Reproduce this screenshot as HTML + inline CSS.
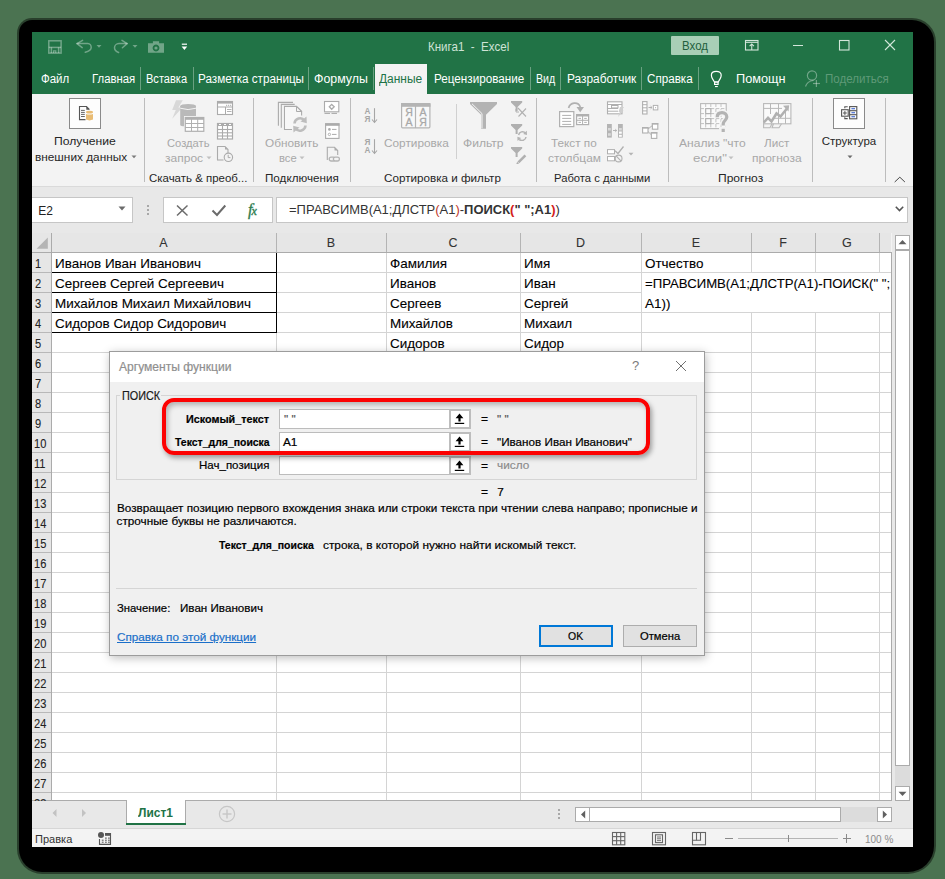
<!DOCTYPE html><html><head><meta charset="utf-8"><style>html,body{margin:0;padding:0}body{width:945px;height:879px;position:relative;overflow:hidden;background:#4b7351;font-family:"Liberation Sans",sans-serif}div{font-family:"Liberation Sans",sans-serif;}</style></head><body><div style="position:absolute;left:17px;top:18px;width:919px;height:856px;box-sizing:border-box;background:rgba(0,0,0,0.45);border-radius:15px 24px 28px 25px;"></div>
<div style="position:absolute;left:19px;top:20px;width:915px;height:852px;box-sizing:border-box;background:#000;border-radius:13px 22px 26px 23px;"></div>
<div style="position:absolute;left:32px;top:32px;width:881px;height:815px;box-sizing:border-box;background:#f3f3f3;"></div>
<div style="position:absolute;left:32px;top:32px;width:881px;height:62px;box-sizing:border-box;background:#217346;"></div>
<div style="position:absolute;left:427.50px;top:39.00px;line-height:15px;font-size:13px;color:#cfe3d6;font-weight:400;white-space:pre;transform:scaleX(0.8883);transform-origin:0 0;">Книга1  -  Excel</div>
<div style="position:absolute;left:671px;top:36px;width:48px;height:19px;box-sizing:border-box;background:#a8cfb6;border-radius:1px;"></div>
<div style="position:absolute;left:682.00px;top:39.00px;line-height:14px;font-size:12.5px;color:#235f3e;font-weight:400;white-space:pre;transform:scaleX(0.9204);transform-origin:0 0;">Вход</div>
<div style="position:absolute;left:41.40px;top:72.00px;line-height:14px;font-size:12px;color:#ffffff;font-weight:400;white-space:pre;transform:scaleX(0.9553);transform-origin:0 0;">Файл</div>
<div style="position:absolute;left:91.70px;top:72.00px;line-height:14px;font-size:12px;color:#ffffff;font-weight:400;white-space:pre;transform:scaleX(0.9461);transform-origin:0 0;">Главная</div>
<div style="position:absolute;left:146.30px;top:72.00px;line-height:14px;font-size:12px;color:#ffffff;font-weight:400;white-space:pre;transform:scaleX(0.9207);transform-origin:0 0;">Вставка</div>
<div style="position:absolute;left:198.30px;top:72.00px;line-height:14px;font-size:12px;color:#ffffff;font-weight:400;white-space:pre;transform:scaleX(0.9739);transform-origin:0 0;">Разметка страницы</div>
<div style="position:absolute;left:314.00px;top:72.00px;line-height:14px;font-size:12px;color:#ffffff;font-weight:400;white-space:pre;transform:scaleX(1.0307);transform-origin:0 0;">Формулы</div>
<div style="position:absolute;left:433.80px;top:72.00px;line-height:14px;font-size:12px;color:#ffffff;font-weight:400;white-space:pre;transform:scaleX(0.9737);transform-origin:0 0;">Рецензирование</div>
<div style="position:absolute;left:535.50px;top:72.00px;line-height:14px;font-size:12px;color:#ffffff;font-weight:400;white-space:pre;transform:scaleX(0.8794);transform-origin:0 0;">Вид</div>
<div style="position:absolute;left:566.50px;top:72.00px;line-height:14px;font-size:12px;color:#ffffff;font-weight:400;white-space:pre;transform:scaleX(0.9903);transform-origin:0 0;">Разработчик</div>
<div style="position:absolute;left:647.30px;top:72.00px;line-height:14px;font-size:12px;color:#ffffff;font-weight:400;white-space:pre;transform:scaleX(0.9703);transform-origin:0 0;">Справка</div>
<div style="position:absolute;left:736.00px;top:72.00px;line-height:14px;font-size:12px;color:#ffffff;font-weight:400;white-space:pre;transform:scaleX(1.0612);transform-origin:0 0;">Помощн</div>
<div style="position:absolute;left:140px;top:67px;width:1px;height:23px;box-sizing:border-box;background:#6aa181;"></div>
<div style="position:absolute;left:193px;top:67px;width:1px;height:23px;box-sizing:border-box;background:#6aa181;"></div>
<div style="position:absolute;left:308px;top:67px;width:1px;height:23px;box-sizing:border-box;background:#6aa181;"></div>
<div style="position:absolute;left:373px;top:67px;width:1px;height:23px;box-sizing:border-box;background:#6aa181;"></div>
<div style="position:absolute;left:530px;top:67px;width:1px;height:23px;box-sizing:border-box;background:#6aa181;"></div>
<div style="position:absolute;left:560px;top:67px;width:1px;height:23px;box-sizing:border-box;background:#6aa181;"></div>
<div style="position:absolute;left:641px;top:67px;width:1px;height:23px;box-sizing:border-box;background:#6aa181;"></div>
<div style="position:absolute;left:698px;top:67px;width:1px;height:23px;box-sizing:border-box;background:#6aa181;"></div>
<div style="position:absolute;left:375px;top:64px;width:52px;height:30px;box-sizing:border-box;background:#f3f3f3;"></div>
<div style="position:absolute;left:379.20px;top:72.00px;line-height:14px;font-size:12px;color:#217346;font-weight:400;white-space:pre;transform:scaleX(0.9959);transform-origin:0 0;">Данные</div>
<div style="position:absolute;left:824.50px;top:72.00px;line-height:14px;font-size:12px;color:#5f9a78;font-weight:400;white-space:pre;transform:scaleX(0.9617);transform-origin:0 0;">Поделиться</div>
<div style="position:absolute;left:32px;top:94px;width:881px;height:92px;box-sizing:border-box;background:#f3f3f3;"></div>
<div style="position:absolute;left:32px;top:186px;width:881px;height:1px;box-sizing:border-box;background:#dadada;"></div>
<div style="position:absolute;left:144px;top:98px;width:1px;height:84px;box-sizing:border-box;background:#bcbcbc;"></div>
<div style="position:absolute;left:253px;top:98px;width:1px;height:84px;box-sizing:border-box;background:#bcbcbc;"></div>
<div style="position:absolute;left:350px;top:98px;width:1px;height:84px;box-sizing:border-box;background:#bcbcbc;"></div>
<div style="position:absolute;left:536px;top:98px;width:1px;height:84px;box-sizing:border-box;background:#bcbcbc;"></div>
<div style="position:absolute;left:668px;top:98px;width:1px;height:84px;box-sizing:border-box;background:#bcbcbc;"></div>
<div style="position:absolute;left:812px;top:98px;width:1px;height:84px;box-sizing:border-box;background:#bcbcbc;"></div>
<div style="position:absolute;left:885px;top:98px;width:1px;height:84px;box-sizing:border-box;background:#bcbcbc;"></div>
<div style="position:absolute;left:456px;top:104px;width:1px;height:55px;box-sizing:border-box;background:#d0d0d0;"></div>
<div style="position:absolute;left:148.90px;top:171.50px;line-height:12px;font-size:11.5px;color:#262626;font-weight:400;white-space:pre;transform:scaleX(0.9961);transform-origin:0 0;">Скачать &amp; преоб...</div>
<div style="position:absolute;left:264.60px;top:171.50px;line-height:12px;font-size:11.5px;color:#262626;font-weight:400;white-space:pre;transform:scaleX(1.0132);transform-origin:0 0;">Подключения</div>
<div style="position:absolute;left:384.40px;top:171.50px;line-height:12px;font-size:11.5px;color:#262626;font-weight:400;white-space:pre;transform:scaleX(1.0140);transform-origin:0 0;">Сортировка и фильтр</div>
<div style="position:absolute;left:554.30px;top:171.50px;line-height:12px;font-size:11.5px;color:#262626;font-weight:400;white-space:pre;transform:scaleX(0.9777);transform-origin:0 0;">Работа с данными</div>
<div style="position:absolute;left:717.60px;top:171.50px;line-height:12px;font-size:11.5px;color:#262626;font-weight:400;white-space:pre;transform:scaleX(1.0481);transform-origin:0 0;">Прогноз</div>
<div style="position:absolute;left:54.00px;top:134.70px;line-height:12px;font-size:11.5px;color:#262626;font-weight:400;white-space:pre;transform:scaleX(1.0579);transform-origin:0 0;">Получение</div>
<div style="position:absolute;left:34.50px;top:151.20px;line-height:12px;font-size:11.5px;color:#262626;font-weight:400;white-space:pre;transform:scaleX(1.0274);transform-origin:0 0;">внешних данных</div>
<div style="position:absolute;left:167.30px;top:136.60px;line-height:12px;font-size:11.5px;color:#a8a8a8;font-weight:400;white-space:pre;transform:scaleX(0.9725);transform-origin:0 0;">Создать</div>
<div style="position:absolute;left:164.80px;top:151.80px;line-height:12px;font-size:11.5px;color:#a8a8a8;font-weight:400;white-space:pre;transform:scaleX(1.0451);transform-origin:0 0;">запрос</div>
<div style="position:absolute;left:264.60px;top:136.60px;line-height:12px;font-size:11.5px;color:#a8a8a8;font-weight:400;white-space:pre;transform:scaleX(1.0251);transform-origin:0 0;">Обновить</div>
<div style="position:absolute;left:278.60px;top:151.80px;line-height:12px;font-size:11.5px;color:#a8a8a8;font-weight:400;white-space:pre;transform:scaleX(0.9772);transform-origin:0 0;">все</div>
<div style="position:absolute;left:383.70px;top:136.60px;line-height:12px;font-size:11.5px;color:#a8a8a8;font-weight:400;white-space:pre;transform:scaleX(1.0264);transform-origin:0 0;">Сортировка</div>
<div style="position:absolute;left:463.30px;top:136.60px;line-height:12px;font-size:11.5px;color:#a8a8a8;font-weight:400;white-space:pre;transform:scaleX(1.0507);transform-origin:0 0;">Фильтр</div>
<div style="position:absolute;left:551.30px;top:137.00px;line-height:12px;font-size:11.5px;color:#a8a8a8;font-weight:400;white-space:pre;transform:scaleX(1.0203);transform-origin:0 0;">Текст по</div>
<div style="position:absolute;left:547.60px;top:152.40px;line-height:12px;font-size:11.5px;color:#a8a8a8;font-weight:400;white-space:pre;transform:scaleX(1.0345);transform-origin:0 0;">столбцам</div>
<div style="position:absolute;left:679.00px;top:136.80px;line-height:12px;font-size:11.5px;color:#a8a8a8;font-weight:400;white-space:pre;transform:scaleX(1.0479);transform-origin:0 0;">Анализ "что</div>
<div style="position:absolute;left:693.00px;top:152.40px;line-height:12px;font-size:11.5px;color:#a8a8a8;font-weight:400;white-space:pre;transform:scaleX(1.1572);transform-origin:0 0;">если"</div>
<div style="position:absolute;left:764.00px;top:136.80px;line-height:12px;font-size:11.5px;color:#a8a8a8;font-weight:400;white-space:pre;transform:scaleX(1.0155);transform-origin:0 0;">Лист</div>
<div style="position:absolute;left:751.70px;top:152.40px;line-height:12px;font-size:11.5px;color:#a8a8a8;font-weight:400;white-space:pre;transform:scaleX(1.0431);transform-origin:0 0;">прогноза</div>
<div style="position:absolute;left:821.70px;top:134.70px;line-height:12px;font-size:11.5px;color:#262626;font-weight:400;white-space:pre;">Структура</div>
<div style="position:absolute;left:69px;top:98px;width:32px;height:31px;box-sizing:border-box;background:#fdfdfd;border:1px solid #8a8a8a;"></div>
<div style="position:absolute;left:833px;top:98px;width:32px;height:31px;box-sizing:border-box;background:#fdfdfd;border:1px solid #8a8a8a;"></div>
<div style="position:absolute;left:32px;top:187px;width:881px;height:46px;box-sizing:border-box;background:#e8e8e8;"></div>
<div style="position:absolute;left:32px;top:197px;width:101px;height:26px;box-sizing:border-box;background:#fff;border:1px solid #c6c6c6;border-left:none;"></div>
<div style="position:absolute;left:38.30px;top:203.50px;line-height:14px;font-size:12px;color:#222;font-weight:400;white-space:pre;">E2</div>
<div style="position:absolute;left:163px;top:197px;width:110px;height:26px;box-sizing:border-box;background:#fff;border:1px solid #c6c6c6;"></div>
<div style="position:absolute;left:276px;top:197px;width:632px;height:26px;box-sizing:border-box;background:#fff;border:1px solid #c6c6c6;"></div>
<div style="position:absolute;left:288.60px;top:202.60px;line-height:14px;font-size:12.5px;color:#333;font-weight:400;white-space:pre;transform:scaleX(1.0370);transform-origin:0 0;">=ПРАВСИМВ(A1;ДЛСТР<span style="color:#c0392b">(</span>A1<span style="color:#c0392b">)</span>-<b>ПОИСК<span style="color:#d42020">(</span>" ";A1<span style="color:#d42020">)</span></b>)</div>
<div style="position:absolute;left:32px;top:233px;width:859px;height:19px;box-sizing:border-box;background:#e6e6e6;"></div>
<div style="position:absolute;left:32px;top:252px;width:859px;height:1px;box-sizing:border-box;background:#ababab;"></div>
<div style="position:absolute;left:51px;top:233px;width:1px;height:567px;box-sizing:border-box;background:#ababab;"></div>
<div style="position:absolute;left:159.31px;top:235.70px;line-height:14px;font-size:12.5px;color:#333;font-weight:400;white-space:pre;-webkit-text-stroke:0.1px currentColor;">A</div>
<div style="position:absolute;left:276px;top:233px;width:1px;height:19px;box-sizing:border-box;background:#b4b4b4;"></div>
<div style="position:absolute;left:326.84px;top:235.70px;line-height:14px;font-size:12.5px;color:#333;font-weight:400;white-space:pre;-webkit-text-stroke:0.1px currentColor;">B</div>
<div style="position:absolute;left:386px;top:233px;width:1px;height:19px;box-sizing:border-box;background:#b4b4b4;"></div>
<div style="position:absolute;left:448.50px;top:235.70px;line-height:14px;font-size:12.5px;color:#333;font-weight:400;white-space:pre;-webkit-text-stroke:0.1px currentColor;">C</div>
<div style="position:absolute;left:520px;top:233px;width:1px;height:19px;box-sizing:border-box;background:#b4b4b4;"></div>
<div style="position:absolute;left:576.00px;top:235.70px;line-height:14px;font-size:12.5px;color:#333;font-weight:400;white-space:pre;-webkit-text-stroke:0.1px currentColor;">D</div>
<div style="position:absolute;left:641px;top:233px;width:1px;height:19px;box-sizing:border-box;background:#b4b4b4;"></div>
<div style="position:absolute;left:691.84px;top:235.70px;line-height:14px;font-size:12.5px;color:#333;font-weight:400;white-space:pre;-webkit-text-stroke:0.1px currentColor;">E</div>
<div style="position:absolute;left:751px;top:233px;width:1px;height:19px;box-sizing:border-box;background:#b4b4b4;"></div>
<div style="position:absolute;left:779.19px;top:235.70px;line-height:14px;font-size:12.5px;color:#333;font-weight:400;white-space:pre;-webkit-text-stroke:0.1px currentColor;">F</div>
<div style="position:absolute;left:815px;top:233px;width:1px;height:19px;box-sizing:border-box;background:#b4b4b4;"></div>
<div style="position:absolute;left:842.12px;top:235.70px;line-height:14px;font-size:12.5px;color:#333;font-weight:400;white-space:pre;-webkit-text-stroke:0.1px currentColor;">G</div>
<div style="position:absolute;left:879px;top:233px;width:1px;height:19px;box-sizing:border-box;background:#b4b4b4;"></div>
<div style="position:absolute;left:52px;top:253px;width:839px;height:547px;box-sizing:border-box;background:#fff;"></div>
<div style="position:absolute;left:32px;top:253px;width:19px;height:547px;box-sizing:border-box;background:#e6e6e6;"></div>
<div style="position:absolute;left:52px;top:272px;width:839px;height:1px;box-sizing:border-box;background:#d4d4d4;"></div>
<div style="position:absolute;left:32px;top:272px;width:19px;height:1px;box-sizing:border-box;background:#b8b8b8;"></div>
<div style="position:absolute;left:52px;top:292px;width:839px;height:1px;box-sizing:border-box;background:#d4d4d4;"></div>
<div style="position:absolute;left:32px;top:292px;width:19px;height:1px;box-sizing:border-box;background:#b8b8b8;"></div>
<div style="position:absolute;left:52px;top:312px;width:839px;height:1px;box-sizing:border-box;background:#d4d4d4;"></div>
<div style="position:absolute;left:32px;top:312px;width:19px;height:1px;box-sizing:border-box;background:#b8b8b8;"></div>
<div style="position:absolute;left:52px;top:332px;width:839px;height:1px;box-sizing:border-box;background:#d4d4d4;"></div>
<div style="position:absolute;left:32px;top:332px;width:19px;height:1px;box-sizing:border-box;background:#b8b8b8;"></div>
<div style="position:absolute;left:52px;top:352px;width:839px;height:1px;box-sizing:border-box;background:#d4d4d4;"></div>
<div style="position:absolute;left:32px;top:352px;width:19px;height:1px;box-sizing:border-box;background:#b8b8b8;"></div>
<div style="position:absolute;left:52px;top:372px;width:839px;height:1px;box-sizing:border-box;background:#d4d4d4;"></div>
<div style="position:absolute;left:32px;top:372px;width:19px;height:1px;box-sizing:border-box;background:#b8b8b8;"></div>
<div style="position:absolute;left:52px;top:392px;width:839px;height:1px;box-sizing:border-box;background:#d4d4d4;"></div>
<div style="position:absolute;left:32px;top:392px;width:19px;height:1px;box-sizing:border-box;background:#b8b8b8;"></div>
<div style="position:absolute;left:52px;top:412px;width:839px;height:1px;box-sizing:border-box;background:#d4d4d4;"></div>
<div style="position:absolute;left:32px;top:412px;width:19px;height:1px;box-sizing:border-box;background:#b8b8b8;"></div>
<div style="position:absolute;left:52px;top:432px;width:839px;height:1px;box-sizing:border-box;background:#d4d4d4;"></div>
<div style="position:absolute;left:32px;top:432px;width:19px;height:1px;box-sizing:border-box;background:#b8b8b8;"></div>
<div style="position:absolute;left:52px;top:452px;width:839px;height:1px;box-sizing:border-box;background:#d4d4d4;"></div>
<div style="position:absolute;left:32px;top:452px;width:19px;height:1px;box-sizing:border-box;background:#b8b8b8;"></div>
<div style="position:absolute;left:52px;top:472px;width:839px;height:1px;box-sizing:border-box;background:#d4d4d4;"></div>
<div style="position:absolute;left:32px;top:472px;width:19px;height:1px;box-sizing:border-box;background:#b8b8b8;"></div>
<div style="position:absolute;left:52px;top:492px;width:839px;height:1px;box-sizing:border-box;background:#d4d4d4;"></div>
<div style="position:absolute;left:32px;top:492px;width:19px;height:1px;box-sizing:border-box;background:#b8b8b8;"></div>
<div style="position:absolute;left:52px;top:512px;width:839px;height:1px;box-sizing:border-box;background:#d4d4d4;"></div>
<div style="position:absolute;left:32px;top:512px;width:19px;height:1px;box-sizing:border-box;background:#b8b8b8;"></div>
<div style="position:absolute;left:52px;top:532px;width:839px;height:1px;box-sizing:border-box;background:#d4d4d4;"></div>
<div style="position:absolute;left:32px;top:532px;width:19px;height:1px;box-sizing:border-box;background:#b8b8b8;"></div>
<div style="position:absolute;left:52px;top:552px;width:839px;height:1px;box-sizing:border-box;background:#d4d4d4;"></div>
<div style="position:absolute;left:32px;top:552px;width:19px;height:1px;box-sizing:border-box;background:#b8b8b8;"></div>
<div style="position:absolute;left:52px;top:572px;width:839px;height:1px;box-sizing:border-box;background:#d4d4d4;"></div>
<div style="position:absolute;left:32px;top:572px;width:19px;height:1px;box-sizing:border-box;background:#b8b8b8;"></div>
<div style="position:absolute;left:52px;top:592px;width:839px;height:1px;box-sizing:border-box;background:#d4d4d4;"></div>
<div style="position:absolute;left:32px;top:592px;width:19px;height:1px;box-sizing:border-box;background:#b8b8b8;"></div>
<div style="position:absolute;left:52px;top:612px;width:839px;height:1px;box-sizing:border-box;background:#d4d4d4;"></div>
<div style="position:absolute;left:32px;top:612px;width:19px;height:1px;box-sizing:border-box;background:#b8b8b8;"></div>
<div style="position:absolute;left:52px;top:632px;width:839px;height:1px;box-sizing:border-box;background:#d4d4d4;"></div>
<div style="position:absolute;left:32px;top:632px;width:19px;height:1px;box-sizing:border-box;background:#b8b8b8;"></div>
<div style="position:absolute;left:52px;top:652px;width:839px;height:1px;box-sizing:border-box;background:#d4d4d4;"></div>
<div style="position:absolute;left:32px;top:652px;width:19px;height:1px;box-sizing:border-box;background:#b8b8b8;"></div>
<div style="position:absolute;left:52px;top:672px;width:839px;height:1px;box-sizing:border-box;background:#d4d4d4;"></div>
<div style="position:absolute;left:32px;top:672px;width:19px;height:1px;box-sizing:border-box;background:#b8b8b8;"></div>
<div style="position:absolute;left:52px;top:692px;width:839px;height:1px;box-sizing:border-box;background:#d4d4d4;"></div>
<div style="position:absolute;left:32px;top:692px;width:19px;height:1px;box-sizing:border-box;background:#b8b8b8;"></div>
<div style="position:absolute;left:52px;top:712px;width:839px;height:1px;box-sizing:border-box;background:#d4d4d4;"></div>
<div style="position:absolute;left:32px;top:712px;width:19px;height:1px;box-sizing:border-box;background:#b8b8b8;"></div>
<div style="position:absolute;left:52px;top:732px;width:839px;height:1px;box-sizing:border-box;background:#d4d4d4;"></div>
<div style="position:absolute;left:32px;top:732px;width:19px;height:1px;box-sizing:border-box;background:#b8b8b8;"></div>
<div style="position:absolute;left:52px;top:752px;width:839px;height:1px;box-sizing:border-box;background:#d4d4d4;"></div>
<div style="position:absolute;left:32px;top:752px;width:19px;height:1px;box-sizing:border-box;background:#b8b8b8;"></div>
<div style="position:absolute;left:52px;top:772px;width:839px;height:1px;box-sizing:border-box;background:#d4d4d4;"></div>
<div style="position:absolute;left:32px;top:772px;width:19px;height:1px;box-sizing:border-box;background:#b8b8b8;"></div>
<div style="position:absolute;left:52px;top:792px;width:839px;height:1px;box-sizing:border-box;background:#d4d4d4;"></div>
<div style="position:absolute;left:32px;top:792px;width:19px;height:1px;box-sizing:border-box;background:#b8b8b8;"></div>
<div style="position:absolute;left:276px;top:253px;width:1px;height:547px;box-sizing:border-box;background:#d4d4d4;"></div>
<div style="position:absolute;left:386px;top:253px;width:1px;height:547px;box-sizing:border-box;background:#d4d4d4;"></div>
<div style="position:absolute;left:520px;top:253px;width:1px;height:547px;box-sizing:border-box;background:#d4d4d4;"></div>
<div style="position:absolute;left:641px;top:253px;width:1px;height:547px;box-sizing:border-box;background:#d4d4d4;"></div>
<div style="position:absolute;left:751px;top:253px;width:1px;height:547px;box-sizing:border-box;background:#d4d4d4;"></div>
<div style="position:absolute;left:815px;top:253px;width:1px;height:547px;box-sizing:border-box;background:#d4d4d4;"></div>
<div style="position:absolute;left:879px;top:253px;width:1px;height:547px;box-sizing:border-box;background:#d4d4d4;"></div>
<div style="position:absolute;left:891px;top:252px;width:1px;height:549px;box-sizing:border-box;background:#ababab;"></div>
<div style="position:absolute;left:32px;top:800px;width:860px;height:1px;box-sizing:border-box;background:#ababab;"></div>
<div style="position:absolute;left:35.33px;top:257.00px;line-height:14px;font-size:12.3px;color:#222;font-weight:400;white-space:pre;transform:scaleX(0.9000);transform-origin:0 0;-webkit-text-stroke:0.1px currentColor;">1</div>
<div style="position:absolute;left:35.33px;top:277.00px;line-height:14px;font-size:12.3px;color:#222;font-weight:400;white-space:pre;transform:scaleX(0.9000);transform-origin:0 0;-webkit-text-stroke:0.1px currentColor;">2</div>
<div style="position:absolute;left:35.33px;top:297.00px;line-height:14px;font-size:12.3px;color:#222;font-weight:400;white-space:pre;transform:scaleX(0.9000);transform-origin:0 0;-webkit-text-stroke:0.1px currentColor;">3</div>
<div style="position:absolute;left:35.33px;top:317.00px;line-height:14px;font-size:12.3px;color:#222;font-weight:400;white-space:pre;transform:scaleX(0.9000);transform-origin:0 0;-webkit-text-stroke:0.1px currentColor;">4</div>
<div style="position:absolute;left:35.33px;top:337.00px;line-height:14px;font-size:12.3px;color:#222;font-weight:400;white-space:pre;transform:scaleX(0.9000);transform-origin:0 0;-webkit-text-stroke:0.1px currentColor;">5</div>
<div style="position:absolute;left:35.33px;top:357.00px;line-height:14px;font-size:12.3px;color:#222;font-weight:400;white-space:pre;transform:scaleX(0.9000);transform-origin:0 0;-webkit-text-stroke:0.1px currentColor;">6</div>
<div style="position:absolute;left:35.33px;top:377.00px;line-height:14px;font-size:12.3px;color:#222;font-weight:400;white-space:pre;transform:scaleX(0.9000);transform-origin:0 0;-webkit-text-stroke:0.1px currentColor;">7</div>
<div style="position:absolute;left:35.33px;top:397.00px;line-height:14px;font-size:12.3px;color:#222;font-weight:400;white-space:pre;transform:scaleX(0.9000);transform-origin:0 0;-webkit-text-stroke:0.1px currentColor;">8</div>
<div style="position:absolute;left:35.33px;top:417.00px;line-height:14px;font-size:12.3px;color:#222;font-weight:400;white-space:pre;transform:scaleX(0.9000);transform-origin:0 0;-webkit-text-stroke:0.1px currentColor;">9</div>
<div style="position:absolute;left:33.56px;top:437.00px;line-height:14px;font-size:12.3px;color:#222;font-weight:400;white-space:pre;transform:scaleX(0.9000);transform-origin:0 0;-webkit-text-stroke:0.1px currentColor;">10</div>
<div style="position:absolute;left:33.94px;top:457.00px;line-height:14px;font-size:12.3px;color:#222;font-weight:400;white-space:pre;transform:scaleX(0.9000);transform-origin:0 0;-webkit-text-stroke:0.1px currentColor;">11</div>
<div style="position:absolute;left:33.56px;top:477.00px;line-height:14px;font-size:12.3px;color:#222;font-weight:400;white-space:pre;transform:scaleX(0.9000);transform-origin:0 0;-webkit-text-stroke:0.1px currentColor;">12</div>
<div style="position:absolute;left:33.56px;top:497.00px;line-height:14px;font-size:12.3px;color:#222;font-weight:400;white-space:pre;transform:scaleX(0.9000);transform-origin:0 0;-webkit-text-stroke:0.1px currentColor;">13</div>
<div style="position:absolute;left:33.56px;top:517.00px;line-height:14px;font-size:12.3px;color:#222;font-weight:400;white-space:pre;transform:scaleX(0.9000);transform-origin:0 0;-webkit-text-stroke:0.1px currentColor;">14</div>
<div style="position:absolute;left:33.56px;top:537.00px;line-height:14px;font-size:12.3px;color:#222;font-weight:400;white-space:pre;transform:scaleX(0.9000);transform-origin:0 0;-webkit-text-stroke:0.1px currentColor;">15</div>
<div style="position:absolute;left:33.56px;top:557.00px;line-height:14px;font-size:12.3px;color:#222;font-weight:400;white-space:pre;transform:scaleX(0.9000);transform-origin:0 0;-webkit-text-stroke:0.1px currentColor;">16</div>
<div style="position:absolute;left:33.56px;top:577.00px;line-height:14px;font-size:12.3px;color:#222;font-weight:400;white-space:pre;transform:scaleX(0.9000);transform-origin:0 0;-webkit-text-stroke:0.1px currentColor;">17</div>
<div style="position:absolute;left:33.56px;top:597.00px;line-height:14px;font-size:12.3px;color:#222;font-weight:400;white-space:pre;transform:scaleX(0.9000);transform-origin:0 0;-webkit-text-stroke:0.1px currentColor;">18</div>
<div style="position:absolute;left:33.56px;top:617.00px;line-height:14px;font-size:12.3px;color:#222;font-weight:400;white-space:pre;transform:scaleX(0.9000);transform-origin:0 0;-webkit-text-stroke:0.1px currentColor;">19</div>
<div style="position:absolute;left:33.56px;top:637.00px;line-height:14px;font-size:12.3px;color:#222;font-weight:400;white-space:pre;transform:scaleX(0.9000);transform-origin:0 0;-webkit-text-stroke:0.1px currentColor;">20</div>
<div style="position:absolute;left:33.56px;top:657.00px;line-height:14px;font-size:12.3px;color:#222;font-weight:400;white-space:pre;transform:scaleX(0.9000);transform-origin:0 0;-webkit-text-stroke:0.1px currentColor;">21</div>
<div style="position:absolute;left:33.56px;top:677.00px;line-height:14px;font-size:12.3px;color:#222;font-weight:400;white-space:pre;transform:scaleX(0.9000);transform-origin:0 0;-webkit-text-stroke:0.1px currentColor;">22</div>
<div style="position:absolute;left:33.56px;top:697.00px;line-height:14px;font-size:12.3px;color:#222;font-weight:400;white-space:pre;transform:scaleX(0.9000);transform-origin:0 0;-webkit-text-stroke:0.1px currentColor;">23</div>
<div style="position:absolute;left:33.56px;top:717.00px;line-height:14px;font-size:12.3px;color:#222;font-weight:400;white-space:pre;transform:scaleX(0.9000);transform-origin:0 0;-webkit-text-stroke:0.1px currentColor;">24</div>
<div style="position:absolute;left:33.56px;top:737.00px;line-height:14px;font-size:12.3px;color:#222;font-weight:400;white-space:pre;transform:scaleX(0.9000);transform-origin:0 0;-webkit-text-stroke:0.1px currentColor;">25</div>
<div style="position:absolute;left:33.56px;top:757.00px;line-height:14px;font-size:12.3px;color:#222;font-weight:400;white-space:pre;transform:scaleX(0.9000);transform-origin:0 0;-webkit-text-stroke:0.1px currentColor;">26</div>
<div style="position:absolute;left:33.56px;top:777.00px;line-height:14px;font-size:12.3px;color:#222;font-weight:400;white-space:pre;transform:scaleX(0.9000);transform-origin:0 0;-webkit-text-stroke:0.1px currentColor;">27</div>
<div style="position:absolute;left:33.56px;top:797.00px;line-height:14px;font-size:12.3px;color:#222;font-weight:400;white-space:pre;transform:scaleX(0.9000);transform-origin:0 0;-webkit-text-stroke:0.1px currentColor;">28</div>
<div style="position:absolute;left:54.80px;top:256.00px;line-height:15px;font-size:13.1px;color:#000;font-weight:400;white-space:pre;transform:scaleX(1.0270);transform-origin:0 0;-webkit-text-stroke:0.1px currentColor;">Иванов Иван Иванович</div>
<div style="position:absolute;left:54.80px;top:276.00px;line-height:15px;font-size:13.1px;color:#000;font-weight:400;white-space:pre;transform:scaleX(1.0270);transform-origin:0 0;-webkit-text-stroke:0.1px currentColor;">Сергеев Сергей Сергеевич</div>
<div style="position:absolute;left:54.80px;top:296.00px;line-height:15px;font-size:13.1px;color:#000;font-weight:400;white-space:pre;transform:scaleX(1.0270);transform-origin:0 0;-webkit-text-stroke:0.1px currentColor;">Михайлов Михаил Михайлович</div>
<div style="position:absolute;left:54.80px;top:316.00px;line-height:15px;font-size:13.1px;color:#000;font-weight:400;white-space:pre;transform:scaleX(1.0270);transform-origin:0 0;-webkit-text-stroke:0.1px currentColor;">Сидоров Сидор Сидорович</div>
<div style="position:absolute;left:389.80px;top:256.00px;line-height:15px;font-size:13.1px;color:#000;font-weight:400;white-space:pre;transform:scaleX(1.0270);transform-origin:0 0;-webkit-text-stroke:0.1px currentColor;">Фамилия</div>
<div style="position:absolute;left:389.80px;top:276.00px;line-height:15px;font-size:13.1px;color:#000;font-weight:400;white-space:pre;transform:scaleX(1.0270);transform-origin:0 0;-webkit-text-stroke:0.1px currentColor;">Иванов</div>
<div style="position:absolute;left:389.80px;top:296.00px;line-height:15px;font-size:13.1px;color:#000;font-weight:400;white-space:pre;transform:scaleX(1.0270);transform-origin:0 0;-webkit-text-stroke:0.1px currentColor;">Сергеев</div>
<div style="position:absolute;left:389.80px;top:316.00px;line-height:15px;font-size:13.1px;color:#000;font-weight:400;white-space:pre;transform:scaleX(1.0270);transform-origin:0 0;-webkit-text-stroke:0.1px currentColor;">Михайлов</div>
<div style="position:absolute;left:389.80px;top:336.00px;line-height:15px;font-size:13.1px;color:#000;font-weight:400;white-space:pre;transform:scaleX(1.0270);transform-origin:0 0;-webkit-text-stroke:0.1px currentColor;">Сидоров</div>
<div style="position:absolute;left:523.80px;top:256.00px;line-height:15px;font-size:13.1px;color:#000;font-weight:400;white-space:pre;transform:scaleX(1.0270);transform-origin:0 0;-webkit-text-stroke:0.1px currentColor;">Имя</div>
<div style="position:absolute;left:523.80px;top:276.00px;line-height:15px;font-size:13.1px;color:#000;font-weight:400;white-space:pre;transform:scaleX(1.0270);transform-origin:0 0;-webkit-text-stroke:0.1px currentColor;">Иван</div>
<div style="position:absolute;left:523.80px;top:296.00px;line-height:15px;font-size:13.1px;color:#000;font-weight:400;white-space:pre;transform:scaleX(1.0270);transform-origin:0 0;-webkit-text-stroke:0.1px currentColor;">Сергей</div>
<div style="position:absolute;left:523.80px;top:316.00px;line-height:15px;font-size:13.1px;color:#000;font-weight:400;white-space:pre;transform:scaleX(1.0270);transform-origin:0 0;-webkit-text-stroke:0.1px currentColor;">Михаил</div>
<div style="position:absolute;left:523.80px;top:336.00px;line-height:15px;font-size:13.1px;color:#000;font-weight:400;white-space:pre;transform:scaleX(1.0270);transform-origin:0 0;-webkit-text-stroke:0.1px currentColor;">Сидор</div>
<div style="position:absolute;left:644.80px;top:256.00px;line-height:15px;font-size:13.1px;color:#000;font-weight:400;white-space:pre;transform:scaleX(1.0270);transform-origin:0 0;-webkit-text-stroke:0.1px currentColor;">Отчество</div>
<div style="position:absolute;left:642px;top:273px;width:249px;height:39px;box-sizing:border-box;background:#fff;"></div>
<div style="position:absolute;left:644.80px;top:276.00px;line-height:15px;font-size:13.1px;color:#000;font-weight:400;white-space:pre;transform:scaleX(1.0052);transform-origin:0 0;-webkit-text-stroke:0.1px currentColor;">=ПРАВСИМВ(A1;ДЛСТР(A1)-ПОИСК(" ";</div>
<div style="position:absolute;left:644.80px;top:296.00px;line-height:15px;font-size:13.1px;color:#000;font-weight:400;white-space:pre;transform:scaleX(1.0270);transform-origin:0 0;-webkit-text-stroke:0.1px currentColor;">A1))</div>
<div style="position:absolute;left:52px;top:253px;width:225px;height:80px;box-sizing:border-box;border:1px solid #000;border-top:none;border-left:none;"></div>
<div style="position:absolute;left:52px;top:272px;width:225px;height:1px;box-sizing:border-box;background:#000;"></div>
<div style="position:absolute;left:52px;top:292px;width:225px;height:1px;box-sizing:border-box;background:#000;"></div>
<div style="position:absolute;left:52px;top:312px;width:225px;height:1px;box-sizing:border-box;background:#000;"></div>
<div style="position:absolute;left:892px;top:233px;width:21px;height:595px;box-sizing:border-box;background:#e8e8e8;"></div>
<div style="position:absolute;left:895px;top:235px;width:15px;height:15px;box-sizing:border-box;background:#fff;border:1px solid #ababab;"></div>
<div style="position:absolute;left:895px;top:250px;width:15px;height:537px;box-sizing:border-box;background:#dcdcdc;"></div>
<div style="position:absolute;left:895px;top:250px;width:15px;height:516px;box-sizing:border-box;background:#fff;border:1px solid #ababab;"></div>
<div style="position:absolute;left:895px;top:786px;width:15px;height:15px;box-sizing:border-box;background:#fff;border:1px solid #ababab;"></div>
<div style="position:absolute;left:32px;top:801px;width:860px;height:27px;box-sizing:border-box;background:#e8e8e8;"></div>
<div style="position:absolute;left:126px;top:800px;width:60px;height:25px;box-sizing:border-box;background:#fff;border-right:1px solid #ababab;border-left:1px solid #ababab;"></div>
<div style="position:absolute;left:126px;top:823px;width:60px;height:2px;box-sizing:border-box;background:#217346;"></div>
<div style="position:absolute;left:138.00px;top:806.00px;line-height:14px;font-size:12.5px;color:#217346;font-weight:700;white-space:pre;transform:scaleX(0.9562);transform-origin:0 0;">Лист1</div>
<div style="position:absolute;left:575px;top:807px;width:15px;height:15px;box-sizing:border-box;background:#fff;border:1px solid #ababab;"></div>
<div style="position:absolute;left:589px;top:807px;width:288px;height:15px;box-sizing:border-box;background:#dcdcdc;"></div>
<div style="position:absolute;left:589px;top:807px;width:252px;height:15px;box-sizing:border-box;background:#fff;border:1px solid #ababab;"></div>
<div style="position:absolute;left:877px;top:807px;width:15px;height:15px;box-sizing:border-box;background:#fff;border:1px solid #ababab;"></div>
<div style="position:absolute;left:32px;top:828px;width:881px;height:19px;box-sizing:border-box;background:#f3f3f3;"></div>
<div style="position:absolute;left:32px;top:828px;width:881px;height:1px;box-sizing:border-box;background:#d6d6d6;"></div>
<div style="position:absolute;left:34.90px;top:832.90px;line-height:12px;font-size:11px;color:#333;font-weight:400;white-space:pre;transform:scaleX(1.0032);transform-origin:0 0;">Правка</div>
<div style="position:absolute;left:865.00px;top:832.90px;line-height:12px;font-size:11px;color:#8a8a8a;font-weight:400;white-space:pre;transform:scaleX(0.9075);transform-origin:0 0;">100 %</div>
<div style="position:absolute;left:109px;top:351px;width:596px;height:305px;box-sizing:border-box;background:#f0f0f0;border:1px solid #9c9c9c;box-shadow:1px 2px 9px rgba(0,0,0,0.26);"></div>
<div style="position:absolute;left:110px;top:352px;width:594px;height:30px;box-sizing:border-box;background:#fff;"></div>
<div style="position:absolute;left:118.60px;top:360.30px;line-height:14px;font-size:12.2px;color:#8f8f8f;font-weight:400;white-space:pre;transform:scaleX(0.9903);transform-origin:0 0;-webkit-text-stroke:0.2px currentColor;">Аргументы функции</div>
<div style="position:absolute;left:116px;top:395px;width:581px;height:85px;box-sizing:border-box;border:1px solid #d5d5d5;"></div>
<div style="position:absolute;left:120px;top:390px;width:41px;height:10px;box-sizing:border-box;background:#f0f0f0;"></div>
<div style="position:absolute;left:122.20px;top:388.70px;line-height:14px;font-size:12px;color:#1a1a1a;font-weight:400;white-space:pre;transform:scaleX(0.9020);transform-origin:0 0;-webkit-text-stroke:0.2px currentColor;">ПОИСК</div>
<div style="position:absolute;left:186.40px;top:412.00px;line-height:14px;font-size:11.8px;color:#000;font-weight:700;white-space:pre;transform:scaleX(0.9129);transform-origin:0 0;-webkit-text-stroke:0.2px currentColor;">Искомый_текст</div>
<div style="position:absolute;left:174.60px;top:434.80px;line-height:14px;font-size:11.8px;color:#000;font-weight:700;white-space:pre;transform:scaleX(0.8858);transform-origin:0 0;-webkit-text-stroke:0.2px currentColor;">Текст_для_поиска</div>
<div style="position:absolute;left:199.00px;top:457.60px;line-height:14px;font-size:11.8px;color:#000;font-weight:400;white-space:pre;transform:scaleX(0.9764);transform-origin:0 0;-webkit-text-stroke:0.2px currentColor;">Нач_позиция</div>
<div style="position:absolute;left:279px;top:409px;width:171px;height:20px;box-sizing:border-box;background:#fff;border:1px solid #bcbcbc;"></div>
<div style="position:absolute;left:449px;top:409px;width:22px;height:20px;box-sizing:border-box;background:#fff;border:2px solid #bdbdbd;"></div>
<div style="position:absolute;left:481.00px;top:412.00px;line-height:14px;font-size:12px;color:#000;font-weight:400;white-space:pre;-webkit-text-stroke:0.2px currentColor;">=</div>
<div style="position:absolute;left:279px;top:432px;width:171px;height:20px;box-sizing:border-box;background:#fff;border:1px solid #bcbcbc;"></div>
<div style="position:absolute;left:449px;top:432px;width:22px;height:20px;box-sizing:border-box;background:#fff;border:2px solid #bdbdbd;"></div>
<div style="position:absolute;left:481.00px;top:435.00px;line-height:14px;font-size:12px;color:#000;font-weight:400;white-space:pre;-webkit-text-stroke:0.2px currentColor;">=</div>
<div style="position:absolute;left:279px;top:456px;width:171px;height:19px;box-sizing:border-box;background:#fff;border:1px solid #bcbcbc;"></div>
<div style="position:absolute;left:449px;top:456px;width:22px;height:19px;box-sizing:border-box;background:#fff;border:2px solid #bdbdbd;"></div>
<div style="position:absolute;left:481.00px;top:459.00px;line-height:14px;font-size:12px;color:#000;font-weight:400;white-space:pre;-webkit-text-stroke:0.2px currentColor;">=</div>
<div style="position:absolute;left:283.00px;top:434.80px;line-height:14px;font-size:11.8px;color:#000;font-weight:400;white-space:pre;-webkit-text-stroke:0.2px currentColor;">A1</div>
<div style="position:absolute;left:284.00px;top:412.00px;line-height:14px;font-size:11.8px;color:#555;font-weight:400;white-space:pre;-webkit-text-stroke:0.2px currentColor;">" "</div>
<div style="position:absolute;left:497.00px;top:412.00px;line-height:14px;font-size:11.8px;color:#555;font-weight:400;white-space:pre;-webkit-text-stroke:0.2px currentColor;">" "</div>
<div style="position:absolute;left:497.00px;top:434.80px;line-height:14px;font-size:11.8px;color:#000;font-weight:400;white-space:pre;transform:scaleX(0.9897);transform-origin:0 0;-webkit-text-stroke:0.2px currentColor;">"Иванов Иван Иванович"</div>
<div style="position:absolute;left:497.00px;top:457.60px;line-height:14px;font-size:11.8px;color:#8c8c8c;font-weight:400;white-space:pre;-webkit-text-stroke:0.2px currentColor;">число</div>
<div style="position:absolute;left:481.00px;top:484.70px;line-height:14px;font-size:12px;color:#000;font-weight:400;white-space:pre;-webkit-text-stroke:0.2px currentColor;">=</div>
<div style="position:absolute;left:497.20px;top:484.70px;line-height:14px;font-size:11.8px;color:#000;font-weight:400;white-space:pre;-webkit-text-stroke:0.2px currentColor;">7</div>
<div style="position:absolute;left:116.50px;top:501.00px;line-height:13px;font-size:11.75px;color:#000;font-weight:400;white-space:pre;transform:scaleX(0.9971);transform-origin:0 0;-webkit-text-stroke:0.2px currentColor;">Возвращает позицию первого вхождения знака или строки текста при чтении слева направо; прописные и</div>
<div style="position:absolute;left:116.50px;top:514.20px;line-height:13px;font-size:11.75px;color:#000;font-weight:400;white-space:pre;-webkit-text-stroke:0.2px currentColor;">строчные буквы не различаются.</div>
<div style="position:absolute;left:218.50px;top:538.00px;line-height:13px;font-size:11.75px;color:#000;font-weight:700;white-space:pre;transform:scaleX(0.8905);transform-origin:0 0;-webkit-text-stroke:0.2px currentColor;">Текст_для_поиска</div>
<div style="position:absolute;left:323.00px;top:538.00px;line-height:13px;font-size:11.75px;color:#000;font-weight:400;white-space:pre;transform:scaleX(1.0097);transform-origin:0 0;-webkit-text-stroke:0.2px currentColor;">строка, в которой нужно найти искомый текст.</div>
<div style="position:absolute;left:116px;top:588px;width:581px;height:1px;box-sizing:border-box;background:#d5d5d5;"></div>
<div style="position:absolute;left:116.50px;top:601.00px;line-height:13px;font-size:11.75px;color:#000;font-weight:400;white-space:pre;transform:scaleX(0.9621);transform-origin:0 0;-webkit-text-stroke:0.2px currentColor;">Значение:</div>
<div style="position:absolute;left:180.40px;top:601.00px;line-height:13px;font-size:11.75px;color:#000;font-weight:400;white-space:pre;transform:scaleX(0.9893);transform-origin:0 0;-webkit-text-stroke:0.2px currentColor;">Иван Иванович</div>
<div style="position:absolute;left:116.50px;top:630.00px;line-height:13px;font-size:11.75px;color:#1a6fc9;font-weight:400;white-space:pre;transform:scaleX(0.9952);transform-origin:0 0;-webkit-text-stroke:0.2px currentColor;text-decoration:underline;">Справка по этой функции</div>
<div style="position:absolute;left:539px;top:625px;width:74px;height:22px;box-sizing:border-box;background:#e1e1e1;border:2px solid #0078d7;"></div>
<div style="position:absolute;left:568.20px;top:628.80px;line-height:14px;font-size:11.8px;color:#000;font-weight:400;white-space:pre;transform:scaleX(0.8856);transform-origin:0 0;-webkit-text-stroke:0.2px currentColor;">OK</div>
<div style="position:absolute;left:623px;top:625px;width:74px;height:22px;box-sizing:border-box;background:#e1e1e1;border:1px solid #adadad;"></div>
<div style="position:absolute;left:639.60px;top:628.80px;line-height:14px;font-size:11.8px;color:#000;font-weight:400;white-space:pre;transform:scaleX(0.9490);transform-origin:0 0;-webkit-text-stroke:0.2px currentColor;">Отмена</div>
<div style="position:absolute;left:162px;top:398px;width:488px;height:57px;box-sizing:border-box;border:4px solid #fc0202;border-radius:12px;box-shadow:2px 3px 5px rgba(0,0,0,0.35), inset 2px 3px 5px rgba(0,0,0,0.25);"></div>
<svg style="position:absolute;left:46px;top:38px;" width="18" height="18" viewBox="0 0 18 18"><g fill="none" stroke="rgba(255,255,255,0.36)" stroke-width="1.5"><rect x="2.8" y="2.8" width="12.3" height="12.3"/><line x1="2.8" y1="9.4" x2="15.1" y2="9.4"/><line x1="5.4" y1="9.4" x2="5.4" y2="15"/><line x1="12.6" y1="9.4" x2="12.6" y2="15"/><polyline points="7.6,15 7.6,12.8 9.8,12.8 9.8,15" stroke-width="1.2"/></g></svg>
<svg style="position:absolute;left:74px;top:36px;" width="20" height="20" viewBox="0 0 20 20"><g fill="none" stroke="rgba(255,255,255,0.36)" stroke-width="1.5" stroke-linejoin="round" stroke-linecap="round"><polyline points="8.6,4.3 3,7.6 8.2,11.6"/><path d="M3 7.6 H13.8 C16 7.6 17.2 9.6 17.2 11.4 C17.2 13.5 15 15.2 11.3 16.2"/></g></svg>
<svg style="position:absolute;left:95px;top:44px;" width="8" height="5" viewBox="0 0 8 5"><polygon points="1.5,1 6.5,1 4,3.8" fill="rgba(255,255,255,0.36)"/></svg>
<svg style="position:absolute;left:110px;top:36px;" width="20" height="20" viewBox="0 0 20 20"><g fill="none" stroke="rgba(255,255,255,0.36)" stroke-width="1.5" stroke-linejoin="round" stroke-linecap="round"><polyline points="12,4.3 17.1,7.6 12.4,11.8"/><path d="M17.1 7.6 H9 C6.2 7.6 4.5 9.8 4.5 11.8 C4.5 13.8 6 15.6 8.6 16.5"/></g></svg>
<svg style="position:absolute;left:131px;top:44px;" width="8" height="5" viewBox="0 0 8 5"><polygon points="1.5,1 6.5,1 4,3.8" fill="rgba(255,255,255,0.36)"/></svg>
<svg style="position:absolute;left:146px;top:39px;" width="20" height="16" viewBox="0 0 20 16"><path d="M2 4.2 H6.9 V2.2 H13.1 V4.2 H18 V13.7 H2 Z M10 5.6 A3.4 3.4 0 1 0 10.01 5.6 Z" fill="rgba(255,255,255,0.36)" fill-rule="evenodd"/><circle cx="10" cy="9" r="1.6" fill="rgba(255,255,255,0.36)"/></svg>
<svg style="position:absolute;left:180px;top:42px;" width="9" height="10" viewBox="0 0 9 10"><rect x="1.8" y="1.6" width="5.2" height="1.2" fill="#fff"/><polygon points="1.6,4.5 7.2,4.5 4.4,8" fill="#fff"/></svg>
<svg style="position:absolute;left:744px;top:39px;" width="16" height="12" viewBox="0 0 16 12"><g fill="none" stroke="#d3e6da" stroke-width="1.1"><rect x="1.5" y="1.5" width="12.5" height="9.5"/><line x1="1.5" y1="3.3" x2="14" y2="3.3"/><line x1="7.75" y1="5" x2="7.75" y2="11"/><polyline points="5.6,7.2 7.75,5 9.9,7.2"/></g></svg>
<div style="position:absolute;left:793px;top:45px;width:10px;height:1px;box-sizing:border-box;background:#d3e6da;"></div>
<svg style="position:absolute;left:837px;top:38px;" width="14" height="14" viewBox="0 0 14 14"><rect x="2.5" y="2.5" width="9.5" height="9.5" fill="none" stroke="#d3e6da" stroke-width="1.1"/></svg>
<svg style="position:absolute;left:883px;top:38px;" width="14" height="14" viewBox="0 0 14 14"><g stroke="#d3e6da" stroke-width="1.1"><line x1="2" y1="2" x2="12" y2="12"/><line x1="12" y1="2" x2="2" y2="12"/></g></svg>
<svg style="position:absolute;left:708px;top:69px;" width="18" height="20" viewBox="0 0 18 20"><g fill="none" stroke="#fff" stroke-width="1.2"><path d="M6.4 13 L4.4 9.6 C3.4 8 3.4 6.6 3.4 6 C3.4 3.4 5.6 2.4 8.3 2.4 C11 2.4 13.2 3.4 13.2 6 C13.2 6.6 13.2 8 12.2 9.6 L10.2 13 Z"/><rect x="6.6" y="13" width="3.5" height="2.4"/></g><rect x="7" y="17" width="2.8" height="1.1" fill="#fff"/></svg>
<svg style="position:absolute;left:803px;top:69px;" width="20" height="20" viewBox="0 0 20 20"><g fill="none" stroke="rgba(255,255,255,0.36)" stroke-width="1.2"><circle cx="9" cy="6.5" r="4.6"/><path d="M2.5 17.5 C3.5 14 6 12 10.5 11.5"/><line x1="13.4" y1="11" x2="13.4" y2="18"/><line x1="10" y1="14.5" x2="17" y2="14.5"/></g></svg>
<svg style="position:absolute;left:76px;top:104px;" width="20" height="20" viewBox="0 0 20 20"><path d="M3.5 2.5 H10.5 L13.3 5.3" fill="none" stroke="#555" stroke-width="1.1"/><path d="M3.5 2 V15.6 H9.5" fill="none" stroke="#555" stroke-width="1.1"/><polygon points="10.3,2.3 13.8,5.8 10.3,5.8" fill="#555"/><g stroke="#555" stroke-width="0.9"><line x1="5" y1="6.4" x2="8.8" y2="6.4"/><line x1="5" y1="8.4" x2="8.8" y2="8.4"/><line x1="5" y1="10.4" x2="8.8" y2="10.4"/><line x1="5" y1="12.5" x2="8.8" y2="12.5"/></g><ellipse cx="13.5" cy="8.2" rx="3.5" ry="1.4" fill="#e9bc74"/><path d="M10 9.9 Q13.5 11.2 17 9.9 V15.6 Q13.5 17.2 10 15.6 Z" fill="#e9bc74"/></svg>
<svg style="position:absolute;left:170px;top:98px;" width="38" height="36" viewBox="0 0 38 36"><polygon points="6,2.2 12.8,2.2 8.4,9.6 12.4,9.6 2.2,20.8 5.8,12 2.2,12" fill="#d8d8d8"/><path d="M10.2 8.2 C10.2 6.6 26 6.6 26 8.2 V27 C26 29 10.2 29 10.2 27 Z" fill="#b9b9b9"/><ellipse cx="18.1" cy="8.2" rx="7.9" ry="2.3" fill="#b9b9b9"/><path d="M10.2 10.2 Q18.1 13 26 10.2" fill="none" stroke="#f3f3f3" stroke-width="1"/><rect x="14" y="18" width="21" height="16" fill="#f3f3f3"/><rect x="15.3" y="19.5" width="18.5" height="13.8" fill="#fff" stroke="#b0b0b0" stroke-width="1.2"/><rect x="15" y="19" width="19" height="2.8" fill="#b0b0b0"/><g stroke="#b0b0b0" stroke-width="1"><line x1="21.5" y1="21" x2="21.5" y2="33"/><line x1="27.7" y1="21" x2="27.7" y2="33"/><line x1="15" y1="25.5" x2="34" y2="25.5"/><line x1="15" y1="29.5" x2="34" y2="29.5"/></g></svg>
<svg style="position:absolute;left:216px;top:100px;" width="18" height="16" viewBox="0 0 18 16"><rect x="1.5" y="1.5" width="15" height="13" fill="#fff" stroke="#ababab" stroke-width="1.1"/><rect x="1" y="1" width="16" height="2.6" fill="#ababab"/><line x1="1.5" y1="7" x2="16.5" y2="7" stroke="#ababab" stroke-width="1"/><line x1="9.5" y1="7" x2="9.5" y2="14.5" stroke="#ababab" stroke-width="1"/><g fill="#ababab"><rect x="10" y="4.8" width="1.2" height="1"/><rect x="12" y="4.8" width="1.2" height="1"/><rect x="14" y="4.8" width="1.2" height="1"/><rect x="11" y="9" width="4.5" height="0.9"/><rect x="11" y="11" width="4.5" height="0.9"/></g></svg>
<svg style="position:absolute;left:216px;top:122px;" width="18" height="18" viewBox="0 0 18 18"><rect x="1.5" y="1.5" width="15" height="15.5" fill="#fff" stroke="#ababab" stroke-width="1.2"/><rect x="1" y="1" width="16" height="3" fill="#ababab"/><g stroke="#ababab" stroke-width="1.1"><line x1="6.5" y1="1" x2="6.5" y2="17"/><line x1="11.5" y1="1" x2="11.5" y2="17"/><line x1="1" y1="7.5" x2="17" y2="7.5"/><line x1="1" y1="10.8" x2="17" y2="10.8"/><line x1="1" y1="14" x2="17" y2="14"/></g><g fill="#fff"><rect x="3" y="2" width="2" height="1"/><rect x="8" y="2" width="2" height="1"/><rect x="13" y="2" width="2" height="1"/></g></svg>
<svg style="position:absolute;left:216px;top:145px;" width="18" height="18" viewBox="0 0 18 18"><path d="M1.5 15 V1.5 H9 L12 4.5 V8" fill="none" stroke="#ababab" stroke-width="1.1"/><polygon points="9,1.5 12,4.5 9,4.5" fill="#ababab"/><line x1="1" y1="15" x2="7.5" y2="15" stroke="#ababab" stroke-width="1.1"/><circle cx="12.4" cy="12.3" r="4.2" fill="#f3f3f3" stroke="#ababab" stroke-width="1.1"/><polyline points="12.2,9.8 12.2,12.6 14.4,12.6" fill="none" stroke="#ababab" stroke-width="1"/></svg>
<svg style="position:absolute;left:276px;top:100px;" width="34" height="34" viewBox="0 0 34 34"><g fill="none" stroke="#ababab" stroke-width="1.1"><polyline points="2.4,25.8 2.4,2.4 17,2.4"/><polyline points="5.3,27.7 5.3,4.4 18.7,4.4"/><path d="M8.5 22 V29.4 H16"/><path d="M8.5 22 V6.4 H20.5 L25.6 11.3 V15.6"/></g><rect x="9" y="7" width="11.5" height="22" fill="#f7f7f7"/><rect x="9" y="11.5" width="16" height="5" fill="#f7f7f7"/><polygon points="20.5,6.4 25.6,11.5 20.5,11.5" fill="none" stroke="#ababab" stroke-width="1"/><g fill="none" stroke="#bdbdbd" stroke-width="2.6"><path d="M18.5 23.5 A5.6 5.6 0 0 1 28.5 20.5"/><path d="M29.5 25.5 A5.6 5.6 0 0 1 19.5 28.5"/></g><polygon points="30.5,16.5 30.8,23.3 24.5,21.5" fill="#bdbdbd"/><polygon points="17.5,32.5 17.2,25.8 23.5,27.5" fill="#bdbdbd"/></svg>
<svg style="position:absolute;left:323px;top:100px;" width="17" height="16" viewBox="0 0 17 16"><rect x="1.5" y="1.5" width="14.3" height="10.3" fill="#fff" stroke="#ababab" stroke-width="1.1"/><line x1="1.5" y1="13.4" x2="7" y2="13.4" stroke="#ababab" stroke-width="1.1"/><line x1="8.5" y1="13.4" x2="14" y2="13.4" stroke="#ababab" stroke-width="1.1"/><polygon points="8.7,4.4 11.2,6.7 8.7,9.2 6.3,6.7" fill="none" stroke="#ababab" stroke-width="1.3"/></svg>
<svg style="position:absolute;left:323px;top:122px;" width="17" height="18" viewBox="0 0 17 18"><rect x="2.6" y="1.8" width="13.4" height="14.6" fill="#fff" stroke="#ababab" stroke-width="1.1"/><rect x="2" y="1.3" width="14.5" height="2.5" fill="#ababab"/><circle cx="6.4" cy="7.4" r="1.3" fill="#ababab"/><circle cx="6.4" cy="12.4" r="1.2" fill="none" stroke="#ababab" stroke-width="0.9"/><line x1="9" y1="7.4" x2="13.5" y2="7.4" stroke="#ababab" stroke-width="1"/><line x1="9" y1="12.4" x2="13.5" y2="12.4" stroke="#ababab" stroke-width="1"/></svg>
<svg style="position:absolute;left:323px;top:145px;" width="18" height="18" viewBox="0 0 18 18"><path d="M4.3 15 V2.3 H11.5 L14.7 5.5 V10" fill="none" stroke="#ababab" stroke-width="1.1"/><polygon points="11.5,2.3 14.7,5.5 11.5,5.5" fill="#ababab"/><g fill="#f3f3f3" stroke="#b4b4b4" stroke-width="1.3"><rect x="6.2" y="12.2" width="6" height="3.8" rx="1.9"/><rect x="10.4" y="12.2" width="6" height="3.8" rx="1.9"/></g></svg>
<div style="position:absolute;left:363.6px;top:107.4px;font-size:9.6px;line-height:8px;font-weight:700;color:#a6a6a6;width:8px;text-align:center;transform:scaleX(0.85);transform-origin:0 0">A<br>Я</div>
<svg style="position:absolute;left:371px;top:108px;" width="8" height="16" viewBox="0 0 8 16"><line x1="3.5" y1="0.2" x2="3.5" y2="14.5" stroke="#a6a6a6" stroke-width="1.1"/><polyline points="1,11.5 3.5,14.5 6,11.5" fill="none" stroke="#a6a6a6" stroke-width="1.1"/></svg>
<div style="position:absolute;left:363.6px;top:138.4px;font-size:9.6px;line-height:8px;font-weight:700;color:#a6a6a6;width:8px;text-align:center;transform:scaleX(0.85);transform-origin:0 0">Я<br>A</div>
<svg style="position:absolute;left:371px;top:139px;" width="8" height="16" viewBox="0 0 8 16"><line x1="3.5" y1="0.2" x2="3.5" y2="14.5" stroke="#a6a6a6" stroke-width="1.1"/><polyline points="1,11.5 3.5,14.5 6,11.5" fill="none" stroke="#a6a6a6" stroke-width="1.1"/></svg>
<svg style="position:absolute;left:400px;top:102px;" width="31" height="27" viewBox="0 0 31 27"><rect x="1.6" y="1.6" width="28.3" height="24.2" rx="1" fill="#f8f8f8" stroke="#b4b4b4" stroke-width="1.2"/><rect x="1" y="1" width="29.5" height="3.8" fill="#b4b4b4"/><line x1="15.5" y1="4" x2="15.5" y2="26" stroke="#b4b4b4" stroke-width="1.2"/></svg>
<div style="position:absolute;left:405px;top:106.5px;font-size:10.5px;line-height:10px;color:#a8a8a8;width:8px;text-align:center;-webkit-text-stroke:0.3px currentColor;">Я</div>
<div style="position:absolute;left:419px;top:106.5px;font-size:10.5px;line-height:10px;color:#a8a8a8;width:8px;text-align:center;-webkit-text-stroke:0.3px currentColor;">A</div>
<div style="position:absolute;left:405px;top:116.8px;font-size:10.5px;line-height:10px;color:#a8a8a8;width:8px;text-align:center;-webkit-text-stroke:0.3px currentColor;">A</div>
<div style="position:absolute;left:419px;top:116.8px;font-size:10.5px;line-height:10px;color:#a8a8a8;width:8px;text-align:center;-webkit-text-stroke:0.3px currentColor;">Я</div>
<svg style="position:absolute;left:468px;top:100px;" width="32" height="32" viewBox="0 0 32 32"><path d="M2 2 H29 V4 L18 14.8 V28.7 H13.1 V14.8 L2 4 Z" fill="#b3b3b3"/><polyline points="4,3.8 14,13.6 14,28.3" fill="none" stroke="#f6f6f6" stroke-width="1"/></svg>
<svg style="position:absolute;left:509px;top:100px;" width="20" height="18" viewBox="0 0 20 18"><path d="M2 1 H13.2 V2.4 L8.6 7 V11 H6.6 V7 L2 2.4 Z" fill="#b0b0b0"/><polyline points="7,9 7,12 10,12" fill="none" stroke="#b0b0b0" stroke-width="1"/><g stroke="#b0b0b0" stroke-width="1.1"><line x1="9" y1="8" x2="17" y2="16.5"/><line x1="17" y1="8.5" x2="9.5" y2="16.5"/></g></svg>
<svg style="position:absolute;left:509px;top:123px;" width="20" height="18" viewBox="0 0 20 18"><path d="M2 1 H13.2 V2.4 L8.6 7 V11 H6.6 V7 L2 2.4 Z" fill="#b0b0b0"/><g fill="none" stroke="#b4b4b4" stroke-width="1.5"><path d="M9.6 12 A4 4 0 0 1 16.5 10"/><path d="M17 14 A4 4 0 0 1 10.3 16.4"/></g><polygon points="17.8,7.8 18,12 14.2,11" fill="#b4b4b4"/><polygon points="8.5,18 8.4,13.8 12.2,15" fill="#b4b4b4"/></svg>
<svg style="position:absolute;left:509px;top:146px;" width="20" height="18" viewBox="0 0 20 18"><path d="M2 1 H13.2 V2.4 L8.6 7 V11 H6.6 V7 L2 2.4 Z" fill="#b0b0b0"/><path d="M8.5 15.5 L15.5 8.5 L17.3 10.3 L10.3 17.3 Z" fill="#b0b0b0"/><polygon points="8.2,15.8 10,17.6 7,18.8" fill="#b0b0b0"/></svg>
<svg style="position:absolute;left:557px;top:99px;" width="34" height="30" viewBox="0 0 34 30"><rect x="2.6" y="12.6" width="14.2" height="15" fill="#fff" stroke="#b0b0b0" stroke-width="1.2"/><g stroke="#b0b0b0" stroke-width="1"><line x1="5.2" y1="16.4" x2="14.2" y2="16.4"/><line x1="5.2" y1="19.4" x2="14.2" y2="19.4"/><line x1="5.2" y1="22.4" x2="14.2" y2="22.4"/><line x1="5.2" y1="25.4" x2="14.2" y2="25.4"/></g><path d="M11.6 9 C13 3.5 21 2 23.3 8" fill="none" stroke="#b0b0b0" stroke-width="1.7"/><polygon points="19.5,8 27,8 23.2,13.3" fill="#b0b0b0"/><rect x="19.6" y="15.6" width="12" height="10" fill="#fff" stroke="#b0b0b0" stroke-width="1.2"/><rect x="19" y="15" width="13" height="2.5" fill="#b0b0b0"/><line x1="19.6" y1="21.3" x2="31.6" y2="21.3" stroke="#b0b0b0" stroke-width="1"/><line x1="25.6" y1="17" x2="25.6" y2="25.6" stroke="#b0b0b0" stroke-width="1"/><g stroke="#a8a8a8" stroke-width="0.9"><line x1="21.5" y1="19.4" x2="24" y2="19.4"/><line x1="27.2" y1="19.4" x2="29.8" y2="19.4"/><line x1="21.5" y1="23.4" x2="24" y2="23.4"/><line x1="27.2" y1="23.4" x2="29.8" y2="23.4"/></g></svg>
<svg style="position:absolute;left:606px;top:100px;" width="20" height="18" viewBox="0 0 20 18"><rect x="1.5" y="1.8" width="14.5" height="12" fill="#fff" stroke="#b0b0b0" stroke-width="1.1"/><g stroke="#b0b0b0" stroke-width="1"><line x1="1.5" y1="4.5" x2="16" y2="4.5"/><line x1="1.5" y1="8.5" x2="12" y2="8.5"/><line x1="1.5" y1="11.2" x2="12" y2="11.2"/></g><rect x="5.5" y="5.5" width="6.5" height="2.4" fill="none" stroke="#b0b0b0" stroke-width="1"/><polygon points="14,7 18,7 15.5,10.5 17.5,10.5 12,17 13.8,12 12.5,12" fill="#cfcfcf"/></svg>
<svg style="position:absolute;left:606px;top:123px;" width="20" height="17" viewBox="0 0 20 17"><rect x="1" y="1" width="4.8" height="13.6" fill="#b4b4b4"/><rect x="12" y="1" width="4.8" height="13.6" fill="#b4b4b4"/><g fill="#dadada"><rect x="2" y="5" width="2.8" height="2.5"/><rect x="2" y="10.2" width="2.8" height="2.6"/><rect x="13" y="5" width="2.8" height="2.5"/></g><g fill="#fff"><rect x="13" y="8.5" width="2.8" height="2.2"/><rect x="13" y="11.8" width="2.8" height="2"/></g><line x1="7" y1="7.5" x2="10.7" y2="7.5" stroke="#b4b4b4" stroke-width="1"/><polyline points="9.3,6.2 10.7,7.5 9.3,8.8" fill="none" stroke="#b4b4b4" stroke-width="1"/></svg>
<svg style="position:absolute;left:606px;top:145px;" width="20" height="18" viewBox="0 0 20 18"><rect x="1.5" y="4.6" width="7" height="4.2" fill="#fff" stroke="#b0b0b0" stroke-width="1"/><polyline points="9,5.8 12,8.5 17.5,1.5" fill="none" stroke="#b0b0b0" stroke-width="1.3"/><rect x="1.5" y="11.5" width="7" height="4.3" fill="#fff" stroke="#b0b0b0" stroke-width="1"/><circle cx="12.6" cy="13.5" r="3.4" fill="#f3f3f3" stroke="#b0b0b0" stroke-width="1.1"/><line x1="10.3" y1="11.2" x2="14.9" y2="15.8" stroke="#b0b0b0" stroke-width="1.1"/></svg>
<svg style="position:absolute;left:627px;top:152px;" width="8" height="5" viewBox="0 0 8 5"><polygon points="1.5,0.8 6.5,0.8 4,3.6" fill="#b4b4b4"/></svg>
<svg style="position:absolute;left:641px;top:100px;" width="19" height="16" viewBox="0 0 19 16"><rect x="1.6" y="1.6" width="4.4" height="12.4" fill="#fff" stroke="#b0b0b0" stroke-width="1.1"/><g stroke="#b0b0b0" stroke-width="1"><line x1="1.5" y1="4.7" x2="6" y2="4.7"/><line x1="1.5" y1="7.8" x2="6" y2="7.8"/><line x1="1.5" y1="10.9" x2="6" y2="10.9"/><line x1="7.5" y1="7.5" x2="11" y2="7.5"/></g><polyline points="9.6,6.2 11,7.5 9.6,8.8" fill="none" stroke="#b0b0b0" stroke-width="1"/><rect x="12.3" y="5.4" width="4.5" height="4.5" fill="#fff" stroke="#b0b0b0" stroke-width="1"/><rect x="14" y="7.2" width="1.1" height="1" fill="#b0b0b0"/></svg>
<svg style="position:absolute;left:641px;top:122px;" width="19" height="18" viewBox="0 0 19 18"><g stroke="#b0b0b0" stroke-width="1" fill="none"><line x1="6.5" y1="7.5" x2="11.3" y2="3.5"/><line x1="6.5" y1="9" x2="10.5" y2="13"/></g><g fill="#fff" stroke="#b0b0b0" stroke-width="1.1"><rect x="1.6" y="5.6" width="5.4" height="5.4"/><rect x="11.4" y="1.6" width="5.4" height="5.6"/><rect x="10.4" y="10.6" width="5.4" height="5.8"/></g><g fill="#b0b0b0"><rect x="1" y="5" width="6.5" height="1.6"/><rect x="10.8" y="1" width="6.5" height="1.6"/><rect x="9.8" y="10" width="6.5" height="1.6"/></g></svg>
<svg style="position:absolute;left:699px;top:102px;" width="32" height="32" viewBox="0 0 32 32"><rect x="1.6" y="1.6" width="25.6" height="25" fill="#fafafa" stroke="#b8b8b8" stroke-width="1.1"/><line x1="6.7" y1="1.6" x2="6.7" y2="26.6" stroke="#bcbcbc" stroke-width="0.9" stroke-dasharray="3.4 1.7"/><line x1="1.6" y1="6.6" x2="27.2" y2="6.6" stroke="#bcbcbc" stroke-width="0.9" stroke-dasharray="3.4 1.7"/><line x1="11.8" y1="1.6" x2="11.8" y2="26.6" stroke="#bcbcbc" stroke-width="0.9" stroke-dasharray="3.4 1.7"/><line x1="1.6" y1="11.6" x2="27.2" y2="11.6" stroke="#bcbcbc" stroke-width="0.9" stroke-dasharray="3.4 1.7"/><line x1="16.9" y1="1.6" x2="16.9" y2="26.6" stroke="#bcbcbc" stroke-width="0.9" stroke-dasharray="3.4 1.7"/><line x1="1.6" y1="16.6" x2="27.2" y2="16.6" stroke="#bcbcbc" stroke-width="0.9" stroke-dasharray="3.4 1.7"/><line x1="22.0" y1="1.6" x2="22.0" y2="26.6" stroke="#bcbcbc" stroke-width="0.9" stroke-dasharray="3.4 1.7"/><line x1="1.6" y1="21.6" x2="27.2" y2="21.6" stroke="#bcbcbc" stroke-width="0.9" stroke-dasharray="3.4 1.7"/><rect x="6.7" y="6.6" width="5.1" height="5" fill="#fafafa" stroke="#b0b0b0" stroke-width="1.1"/><rect x="6.7" y="16.6" width="5.1" height="5" fill="#fafafa" stroke="#b0b0b0" stroke-width="1.1"/><rect x="26.6" y="9.5" width="4" height="22" fill="#f3f3f3"/><rect x="20" y="24.8" width="11" height="7" fill="#f3f3f3"/><path d="M18.2 15.2 C18.2 12 20.3 10.6 23 10.6 C26 10.6 27.8 12.5 27.8 15 C27.8 18.2 24.2 18.8 24.2 22 V23.5" fill="none" stroke="#f3f3f3" stroke-width="6"/><rect x="21.3" y="25.6" width="5.8" height="5.8" fill="#f3f3f3"/><path d="M18.2 15.2 C18.2 12 20.3 10.6 23 10.6 C26 10.6 27.8 12.5 27.8 15 C27.8 18.2 24.2 18.8 24.2 22 V23.5" fill="none" stroke="#b3b3b3" stroke-width="3.2"/><rect x="22.6" y="26.8" width="3.2" height="3.2" fill="#b3b3b3"/></svg>
<svg style="position:absolute;left:762px;top:102px;" width="32" height="28" viewBox="0 0 32 28"><rect x="1.6" y="1.6" width="27.3" height="20.2" fill="#fafafa" stroke="#b8b8b8" stroke-width="1.1"/><g stroke="#b8b8b8" stroke-width="1"><line x1="8.5" y1="1.6" x2="8.5" y2="12"/><line x1="16.5" y1="1.6" x2="16.5" y2="21.8"/><line x1="23.5" y1="10" x2="23.5" y2="21.8"/><line x1="1.6" y1="6.4" x2="20" y2="6.4"/><line x1="12" y1="16.3" x2="28.9" y2="16.3"/></g><polyline points="1.8,20.5 6,15.8 9.5,19.5 14.5,11.5 18.5,14.5 25,6.5" fill="none" stroke="#b0b0b0" stroke-width="2.6"/><polygon points="21,3.8 27.2,3.2 26.5,9.5" fill="#b3b3b3"/><path d="M1.6 21.8 V25.8 H8 L10 21.8 M11.5 21.8 L10 25.8 H17 L19.5 21.8" fill="none" stroke="#b8b8b8" stroke-width="1.1"/></svg>
<svg style="position:absolute;left:839px;top:104px;" width="20" height="17" viewBox="0 0 20 17"><g fill="none" stroke="#555" stroke-width="1.1"><rect x="2.6" y="5.7" width="6.6" height="6.5"/><polyline points="8.7,2.8 5.8,2.8 5.8,4.3"/><polyline points="8.7,14.6 5.8,14.6 5.8,13.2"/><rect x="10.6" y="2.6" width="7.2" height="12.2"/><line x1="10.6" y1="6.7" x2="17.8" y2="6.7"/><line x1="10.6" y1="10.7" x2="17.8" y2="10.7"/></g><g stroke="#555" stroke-width="1"><line x1="4" y1="9" x2="7.8" y2="9"/><line x1="5.9" y1="7.1" x2="5.9" y2="10.9"/></g><g stroke="#4a70d4" stroke-width="1.2"><line x1="12.4" y1="4.7" x2="16" y2="4.7"/><line x1="12.4" y1="8.7" x2="16" y2="8.7"/><line x1="12.4" y1="12.7" x2="16" y2="12.7"/></g></svg>
<svg style="position:absolute;left:130.5px;top:155.0px;" width="7" height="5" viewBox="0 0 7 5"><polygon points="0.5,0.5 5.5,0.5 3,3.3" fill="#7a7a7a"/></svg>
<svg style="position:absolute;left:206.2px;top:155.5px;" width="7" height="5" viewBox="0 0 7 5"><polygon points="0.5,0.5 5.5,0.5 3,3.3" fill="#c0c0c0"/></svg>
<svg style="position:absolute;left:299.0px;top:155.5px;" width="7" height="5" viewBox="0 0 7 5"><polygon points="0.5,0.5 5.5,0.5 3,3.3" fill="#c0c0c0"/></svg>
<svg style="position:absolute;left:727.5px;top:155.5px;" width="7" height="5" viewBox="0 0 7 5"><polygon points="0.5,0.5 5.5,0.5 3,3.3" fill="#c0c0c0"/></svg>
<svg style="position:absolute;left:846.5px;top:154.5px;" width="7" height="5" viewBox="0 0 7 5"><polygon points="0.5,0.5 5.5,0.5 3,3.3" fill="#6a6a6a"/></svg>
<svg style="position:absolute;left:893px;top:175px;" width="14" height="9" viewBox="0 0 14 9"><polyline points="1.7,7 6.8,2.2 11.9,7" fill="none" stroke="#333" stroke-width="0.9"/></svg>
<svg style="position:absolute;left:117px;top:205px;" width="10" height="7" viewBox="0 0 10 7"><polygon points="1.5,1.6 8.5,1.6 5,5.5" fill="#6b6b6b"/></svg>
<div style="position:absolute;left:147px;top:205px;width:2px;height:2px;box-sizing:border-box;background:#a8a8a8;"></div>
<div style="position:absolute;left:147px;top:209px;width:2px;height:2px;box-sizing:border-box;background:#a8a8a8;"></div>
<div style="position:absolute;left:147px;top:213px;width:2px;height:2px;box-sizing:border-box;background:#a8a8a8;"></div>
<svg style="position:absolute;left:175px;top:204px;" width="14" height="13" viewBox="0 0 14 13"><g stroke="#6b6b6b" stroke-width="1.5"><line x1="2" y1="1.5" x2="12.5" y2="11.5"/><line x1="12.5" y1="1.5" x2="2" y2="11.5"/></g></svg>
<svg style="position:absolute;left:211px;top:203px;" width="16" height="14" viewBox="0 0 16 14"><polyline points="1.5,7.5 6,12 14.3,2.5" fill="none" stroke="#6b6b6b" stroke-width="2"/></svg>
<div style="position:absolute;left:248px;top:201px;font-family:'Liberation Serif',serif;font-style:italic;font-weight:400;font-size:16px;line-height:18px;color:#2e7d4f;letter-spacing:0px;-webkit-text-stroke:0.35px currentColor">f<span style="font-size:12px;margin-left:-1px">x</span></div>
<svg style="position:absolute;left:894px;top:205px;" width="12" height="8" viewBox="0 0 12 8"><polyline points="1.8,1.8 5.5,5.5 9.2,1.8" fill="none" stroke="#555" stroke-width="1.6"/></svg>
<svg style="position:absolute;left:36px;top:237px;" width="13" height="13" viewBox="0 0 13 13"><polygon points="0.6,11.8 11.8,11.8 11.8,0.6" fill="#b4b4b4"/></svg>
<svg style="position:absolute;left:896px;top:236px;" width="13" height="13" viewBox="0 0 13 13"><polygon points="2.5,8.2 10.5,8.2 6.5,4" fill="#606060"/></svg>
<svg style="position:absolute;left:896px;top:787px;" width="13" height="13" viewBox="0 0 13 13"><polygon points="2.5,4.8 10.5,4.8 6.5,9" fill="#606060"/></svg>
<svg style="position:absolute;left:577px;top:808px;" width="12" height="13" viewBox="0 0 12 13"><polygon points="8.2,2.5 8.2,10.5 4,6.5" fill="#606060"/></svg>
<svg style="position:absolute;left:878px;top:808px;" width="13" height="13" viewBox="0 0 13 13"><polygon points="4.8,2.5 4.8,10.5 9,6.5" fill="#606060"/></svg>
<div style="position:absolute;left:558px;top:809px;width:2px;height:2px;box-sizing:border-box;background:#a8a8a8;"></div>
<div style="position:absolute;left:558px;top:813px;width:2px;height:2px;box-sizing:border-box;background:#a8a8a8;"></div>
<div style="position:absolute;left:558px;top:817px;width:2px;height:2px;box-sizing:border-box;background:#a8a8a8;"></div>
<svg style="position:absolute;left:51px;top:808px;" width="8" height="10" viewBox="0 0 8 10"><polygon points="5.5,1 5.5,9 1.5,5" fill="#c2c2c2"/></svg>
<svg style="position:absolute;left:80px;top:808px;" width="8" height="10" viewBox="0 0 8 10"><polygon points="2,1 2,9 6,5" fill="#c2c2c2"/></svg>
<svg style="position:absolute;left:217px;top:804px;" width="20" height="20" viewBox="0 0 20 20"><circle cx="10" cy="10" r="7.6" fill="none" stroke="#c6c6c6" stroke-width="1.2"/><g stroke="#c6c6c6" stroke-width="1.4"><line x1="10" y1="5.5" x2="10" y2="14.5"/><line x1="5.5" y1="10" x2="14.5" y2="10"/></g></svg>
<svg style="position:absolute;left:97px;top:831px;" width="16" height="16" viewBox="0 0 16 16"><circle cx="4" cy="4" r="3" fill="#555"/><path d="M2.5 8 V13.4 H13.5 V2.5 H8" fill="none" stroke="#555" stroke-width="1.1"/><rect x="8" y="2" width="6" height="2.8" fill="#555"/><g fill="#555"><rect x="8" y="6.6" width="1.8" height="1"/><rect x="11" y="6.6" width="1.8" height="1"/><rect x="4.8" y="8.7" width="1.8" height="1"/><rect x="8" y="8.7" width="1.8" height="1"/><rect x="11" y="8.7" width="1.8" height="1"/><rect x="4.8" y="10.7" width="1.8" height="1"/><rect x="8" y="10.7" width="1.8" height="1"/><rect x="11" y="10.7" width="1.8" height="1"/></g></svg>
<svg style="position:absolute;left:611px;top:831px;" width="16" height="16" viewBox="0 0 16 16"><g fill="none" stroke="#666" stroke-width="1.1"><rect x="1.5" y="1.5" width="12.3" height="12.3"/><line x1="5.6" y1="1.5" x2="5.6" y2="13.8"/><line x1="9.7" y1="1.5" x2="9.7" y2="13.8"/><line x1="1.5" y1="5.6" x2="13.8" y2="5.6"/><line x1="1.5" y1="9.7" x2="13.8" y2="9.7"/></g></svg>
<svg style="position:absolute;left:651px;top:831px;" width="16" height="16" viewBox="0 0 16 16"><g fill="none" stroke="#666" stroke-width="1.1"><rect x="1.5" y="1.5" width="13" height="12.3"/><rect x="4.5" y="3.8" width="7" height="7.8"/></g><g stroke="#666" stroke-width="0.9"><line x1="6" y1="6" x2="10" y2="6"/><line x1="6" y1="7.8" x2="10" y2="7.8"/><line x1="6" y1="9.6" x2="10" y2="9.6"/></g></svg>
<svg style="position:absolute;left:691px;top:831px;" width="16" height="16" viewBox="0 0 16 16"><g fill="none" stroke="#666" stroke-width="1.1"><rect x="1.5" y="1.5" width="13" height="12.3"/><polyline points="1.5,9.3 9.5,9.3 9.5,1.5"/><line x1="5.5" y1="1.5" x2="5.5" y2="9.3"/></g></svg>
<div style="position:absolute;left:725px;top:838px;width:8px;height:1px;box-sizing:border-box;background:#8a8a8a;"></div>
<div style="position:absolute;left:738px;top:838px;width:100px;height:1px;box-sizing:border-box;background:#b5b5b5;"></div>
<div style="position:absolute;left:788px;top:835px;width:1px;height:7px;box-sizing:border-box;background:#8a8a8a;"></div>
<div style="position:absolute;left:843px;top:838px;width:8px;height:1px;box-sizing:border-box;background:#8a8a8a;"></div>
<div style="position:absolute;left:846px;top:834px;width:1px;height:9px;box-sizing:border-box;background:#8a8a8a;"></div>
<svg style="position:absolute;left:631px;top:360px;" width="10" height="12" viewBox="0 0 10 12"></svg>
<div style="position:absolute;left:632px;top:358px;font-size:13px;line-height:15px;color:#7a7a7a">?</div>
<svg style="position:absolute;left:674px;top:359px;" width="14" height="14" viewBox="0 0 14 14"><g stroke="#707070" stroke-width="1"><line x1="2" y1="2" x2="12" y2="12"/><line x1="12" y1="2" x2="2" y2="12"/></g></svg>
<svg style="position:absolute;left:452px;top:412px;" width="16" height="14" viewBox="0 0 16 14"><polygon points="7.5,1.5 3.6,6.2 6.4,6.2 6.4,9.6 8.6,9.6 8.6,6.2 11.4,6.2" fill="#000"/><rect x="2.8" y="10.8" width="9.4" height="1.2" fill="#000"/></svg>
<svg style="position:absolute;left:452px;top:435px;" width="16" height="14" viewBox="0 0 16 14"><polygon points="7.5,1.5 3.6,6.2 6.4,6.2 6.4,9.6 8.6,9.6 8.6,6.2 11.4,6.2" fill="#000"/><rect x="2.8" y="10.8" width="9.4" height="1.2" fill="#000"/></svg>
<svg style="position:absolute;left:452px;top:459px;" width="16" height="14" viewBox="0 0 16 14"><polygon points="7.5,1.5 3.6,6.2 6.4,6.2 6.4,9.6 8.6,9.6 8.6,6.2 11.4,6.2" fill="#000"/><rect x="2.8" y="10.8" width="9.4" height="1.2" fill="#000"/></svg></body></html>
